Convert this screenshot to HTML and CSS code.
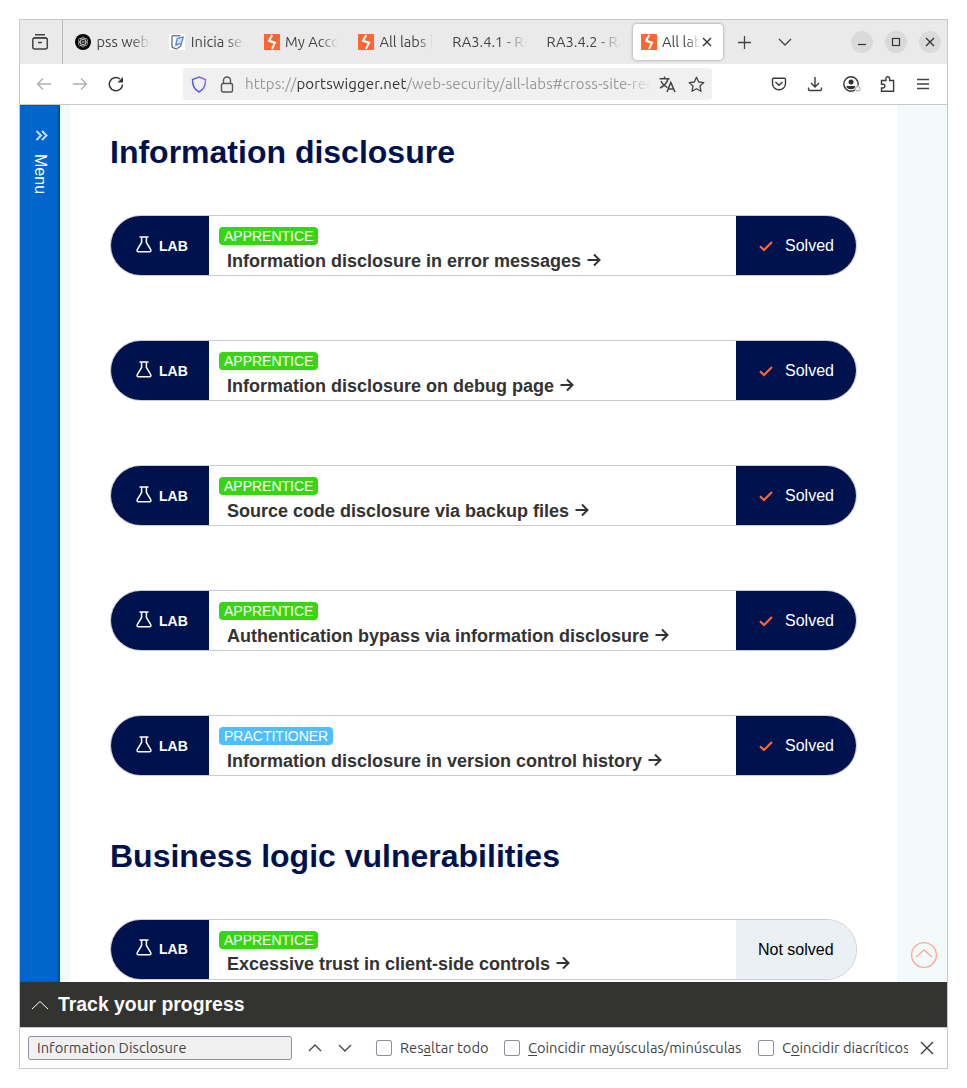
FILE: index.html
```html
<!DOCTYPE html>
<html lang="es">
<head>
<meta charset="utf-8">
<title>All labs</title>
<link rel="stylesheet" href="styles.css">
</head>
<body>
<svg class="defs" width="0" height="0">
  <symbol id="burp" viewBox="0 0 16 16"><rect width="16" height="16" fill="#ff6633"/><path d="M8.200 1 5 6.800 11 8.700 7.900 15" fill="none" stroke="#fff" stroke-width="2"/></symbol>
  <symbol id="flask" viewBox="0 0 16 17"><path d="M3.500 1h9M5.600 1.200v5.300L1.300 13.600c-.6 1.200 0 2.100 1.100 2.100h11.200c1.100 0 1.700-.9 1.100-2.100L10.400 6.500V1.200" fill="none" stroke="#fff" stroke-width="1.500"/></symbol>
  <symbol id="check" viewBox="0 0 14 12"><path d="M1 6.200 5 10 13 2" fill="none" stroke="#ff6633" stroke-width="2.200"/></symbol>
  <symbol id="arrow" viewBox="0 0 14 14"><path d="M.5 7h11.500M7 1.500 12.500 7 7 12.500" fill="none" stroke="#333332" stroke-width="2"/></symbol>
  <symbol id="chev" viewBox="0 0 14 8"><path d="M1 1l6 6 6-6" fill="none" stroke="currentColor" stroke-width="1.300"/></symbol>
</svg>
<div class="window">
  <header class="tabbar">
    <div class="recent"><svg width="18" height="18" viewBox="0 0 18 18" fill="none" stroke="#444" stroke-width="1.500"><path d="M4 1.800h10M2.500 4.800h13"/><rect x="1.800" y="5" width="14.500" height="11" rx="2"/><path d="M7 9.500h4"/></svg></div>
    <div class="tabs">
      <div class="tab"><svg width="16" height="16" viewBox="0 0 16 16"><circle cx="8" cy="8" r="8" fill="#000"/><g fill="none" stroke="#ddd" stroke-width=".7"><ellipse cx="8" cy="8" rx="2.500" ry="5"/><ellipse cx="8" cy="8" rx="2.500" ry="5" transform="rotate(60 8 8)"/><ellipse cx="8" cy="8" rx="2.500" ry="5" transform="rotate(120 8 8)"/><circle cx="8" cy="8" r="1"/></g></svg><span class="label">pss web</span></div>
      <div class="tab"><svg width="16" height="16" viewBox="0 0 16 16"><rect width="16" height="16" fill="#fff"/><path d="M12 9.500V12L7.500 15 3 13.300V1.800h8.500" fill="#fff" stroke="#3c435c" stroke-width="1"/><path d="M8.200 4.300 14.300 3 12.300 9.500 6.800 10.700z" fill="#d6e5ff" stroke="#4c7df0" stroke-width="1.200"/><path d="M6.800 10.700 4.500 13l4.500-1.200" fill="#9dbcff"/></svg><span class="label n2">Inicia se</span></div>
      <div class="tab"><svg width="16" height="16"><use href="#burp"/></svg><span class="label n3">My Acco</span></div>
      <div class="tab sep"><svg width="16" height="16"><use href="#burp"/></svg><span class="label n4">All labs</span></div>
      <div class="tab"><span class="label wide">RA3.4.1 - RA</span></div>
      <div class="tab"><span class="label wide">RA3.4.2 - RA</span></div>
    </div>
    <div class="tab-active"><svg width="16" height="16"><use href="#burp"/></svg><span class="label short">All labs</span><svg width="10" height="10" viewBox="0 0 10 10"><path d="M1 1l8 8M9 1l-8 8" stroke="#333" stroke-width="1.400"/></svg></div>
    <svg class="plus" width="13" height="13" viewBox="0 0 13 13"><path d="M6.500 0v13M0 6.500h13" stroke="#444" stroke-width="1.300"/></svg>
    <svg class="list" width="14" height="8"><use href="#chev"/></svg>
    <div class="controls">
      <span><svg width="22" height="22"><path d="M7 13.500h8" stroke="#333" stroke-width="1.200"/></svg></span>
      <span><svg width="22" height="22"><rect x="7.500" y="7.500" width="7" height="7" fill="none" stroke="#333" stroke-width="1.200"/></svg></span>
      <span><svg width="22" height="22"><path d="M7 7l8 8M15 7l-8 8" stroke="#333" stroke-width="1.300"/></svg></span>
    </div>
  </header>
  <nav class="navbar">
    <div class="history">
      <svg width="16" height="16" viewBox="0 0 16 16" fill="none" stroke="#b0b0b0" stroke-width="1.400"><path d="M15 8H1.500M7 2.500 1.500 8 7 13.500"/></svg>
      <svg width="16" height="16" viewBox="0 0 16 16" fill="none" stroke="#b0b0b0" stroke-width="1.400"><path d="M1 8h13.500M9 2.500 14.500 8 9 13.500"/></svg>
      <svg width="16" height="16" viewBox="0 0 16 16" fill="none" stroke="#333" stroke-width="1.500"><path d="M14.500 8.500A6.600 6.600 0 1 1 12 3"/><path d="M15 1v5.500H9.500z" fill="#333" stroke="none"/></svg>
    </div>
    <div class="urlbar">
      <svg width="16" height="17" viewBox="0 0 16 17"><defs><linearGradient id="sh" x1="0" y1="1" x2="1" y2="0"><stop offset="0" stop-color="#2b50d8"/><stop offset="1" stop-color="#9b6bff"/></linearGradient></defs><path d="M8 1 14.500 3.500C14.700 9 13 13.500 8 16 3 13.500 1.300 9 1.500 3.500z" fill="none" stroke="url(#sh)" stroke-width="1.400"/></svg>
      <svg class="lock" width="14" height="17" viewBox="0 0 14 17" fill="none" stroke="#555" stroke-width="1.400"><rect x="1.500" y="7.500" width="11" height="8.500" rx="1.500"/><path d="M3.500 7V4.500a3.500 3.500 0 0 1 7 0V7"/></svg>
      <span class="url">https://<b>portswigger.net</b>/web-security/all-labs#cross-site-req</span>
      <svg width="17" height="17" viewBox="0 0 17 17" fill="none" stroke="#444" stroke-width="1.500"><path d="M.5 2.700h10M5.500.5v2M2 5c2 4 4 5.500 6.500 6.500M9 3C8 7 5 10 1 12"/><path d="M8 16l3.800-9.500L16 16M9.500 13h5"/></svg>
      <svg class="star" width="17" height="17" viewBox="0 0 17 17"><path d="M8.500 1.200 10.700 6l5.100.6-3.800 3.500 1 5.200-4.500-2.600L4 15.300l1-5.200L1.200 6.600 6.300 6z" fill="none" stroke="#444" stroke-width="1.300" stroke-linejoin="round"/></svg>
    </div>
    <div class="tools">
      <svg width="16" height="16" viewBox="0 0 16 16" fill="none" stroke="#3b3b3b" stroke-width="1.400"><path d="M2.500 2.200h11a1 1 0 0 1 1 1v4.300a6.500 6.300 0 0 1-13 0V3.200a1 1 0 0 1 1-1zM4.500 6 8 9.300 11.500 6"/></svg>
      <svg width="16" height="16" viewBox="0 0 16 16" fill="none" stroke="#3b3b3b" stroke-width="1.400"><path d="M8 1v10M4 7l4 4 4-4M1.500 11.500V13a1.500 1.500 0 0 0 1.500 1.500h10a1.500 1.500 0 0 0 1.500-1.500v-1.500"/></svg>
      <svg width="18" height="16" viewBox="0 0 18 16"><circle cx="8" cy="8" r="7.200" fill="none" stroke="#333" stroke-width="1.400"/><circle cx="8" cy="6" r="2.500" fill="#333"/><path d="M3.500 10h9v1c-1 3-8 3-9 0z" fill="#333"/><circle cx="14.800" cy="12.800" r="3.200" fill="#fff"/><circle cx="14.800" cy="12.800" r="2.300" fill="none" stroke="#999"/></svg>
      <svg width="16" height="16" viewBox="0 0 16 16" fill="none" stroke="#3b3b3b" stroke-width="1.400"><path d="M1.500 7V4.500H6V2.500a1.800 1.800 0 0 1 3.600 0v2h4v10.800H1.500V12H3a1.900 1.900 0 0 0 0-3.800H1.500z"/></svg>
      <svg width="14" height="12" viewBox="0 0 14 12"><path d="M1 1.500h12M1 6h12M1 10.500h12" stroke="#444" stroke-width="1.300"/></svg>
    </div>
  </nav>
  <div class="viewport">
    <aside class="menu"><svg width="13" height="11" viewBox="0 0 13 11"><path d="M1.500 1 6 5.500 1.500 10M7 1l4.500 4.500L7 10" fill="none" stroke="#c9dcf2" stroke-width="2"/></svg><span>Menu</span></aside>
    <main class="page">
      <h2>Information disclosure</h2>
      <article class="lab"><div class="kind"><svg width="16" height="17"><use href="#flask"/></svg>LAB</div><div class="info"><span class="level">APPRENTICE</span><a>Information disclosure in error messages<svg width="14" height="14"><use href="#arrow"/></svg></a></div><div class="status"><svg width="14" height="12"><use href="#check"/></svg>Solved</div></article>
      <article class="lab"><div class="kind"><svg width="16" height="17"><use href="#flask"/></svg>LAB</div><div class="info"><span class="level">APPRENTICE</span><a>Information disclosure on debug page<svg width="14" height="14"><use href="#arrow"/></svg></a></div><div class="status"><svg width="14" height="12"><use href="#check"/></svg>Solved</div></article>
      <article class="lab"><div class="kind"><svg width="16" height="17"><use href="#flask"/></svg>LAB</div><div class="info"><span class="level">APPRENTICE</span><a>Source code disclosure via backup files<svg width="14" height="14"><use href="#arrow"/></svg></a></div><div class="status"><svg width="14" height="12"><use href="#check"/></svg>Solved</div></article>
      <article class="lab"><div class="kind"><svg width="16" height="17"><use href="#flask"/></svg>LAB</div><div class="info"><span class="level">APPRENTICE</span><a>Authentication bypass via information disclosure<svg width="14" height="14"><use href="#arrow"/></svg></a></div><div class="status"><svg width="14" height="12"><use href="#check"/></svg>Solved</div></article>
      <article class="lab"><div class="kind"><svg width="16" height="17"><use href="#flask"/></svg>LAB</div><div class="info"><span class="level practitioner">PRACTITIONER</span><a>Information disclosure in version control history<svg width="14" height="14"><use href="#arrow"/></svg></a></div><div class="status"><svg width="14" height="12"><use href="#check"/></svg>Solved</div></article>
      <h2>Business logic vulnerabilities</h2>
      <article class="lab last"><div class="kind"><svg width="16" height="17"><use href="#flask"/></svg>LAB</div><div class="info"><span class="level">APPRENTICE</span><a>Excessive trust in client-side controls<svg width="14" height="14"><use href="#arrow"/></svg></a></div><div class="status open">Not solved</div></article>
    </main>
    <div class="gutter"><svg width="28" height="28" viewBox="0 0 28 28" fill="none" stroke="#ffab91" stroke-width="1.400"><circle cx="14" cy="14" r="12.400"/><path d="M6 16l8-7 8 7"/></svg></div>
  </div>
  <div class="progress"><svg width="18" height="10" viewBox="0 0 18 10"><path d="M1 9l8-7.500L17 9" fill="none" stroke="#fff" stroke-width="1"/></svg>Track your progress</div>
  <footer class="find">
    <div class="field">Information Disclosure</div>
    <svg class="prev" width="14" height="8"><use href="#chev"/></svg>
    <svg class="next" width="14" height="8"><use href="#chev"/></svg>
    <label class="opt o1"><i></i><span>Res<u>a</u>ltar todo</span></label>
    <label class="opt o2"><i></i><span><u>C</u>oincidir mayúsculas/minúsculas</span></label>
    <label class="opt o3"><i></i><span>C<u>o</u>incidir diacríticos</span></label>
    <svg class="close" width="14" height="14" viewBox="0 0 14 14"><path d="M1 1l12 12M13 1 1 13" stroke="#333" stroke-width="1.300"/></svg>
  </footer>
</div>
</body>
</html>
```

FILE: styles.css
```css
* { box-sizing: border-box; }
body { margin: 0; padding: 19px; background: #fff; font-family: Ubuntu, "Noto Sans", sans-serif; color: #444; }
svg { display: block; flex: none; }
.defs { position: absolute; }
.window { width: 929px; height: 1050px; border: 1px solid #c8c8c8; display: flex; flex-direction: column; overflow: hidden; }

.tabbar { height: 44px; flex: none; background: #eaeaea; display: flex; align-items: center; font-size: 14.67px; }
.recent { width: 43px; height: 44px; border-right: 1px solid #bcbcbc; display: flex; align-items: center; padding-left: 11px; }
.tabs { display: grid; grid-template-columns: repeat(6, 94.3px); width: 570px; padding-left: 12px; }
.tab { display: flex; align-items: center; gap: 5.5px; position: relative; }
.sep::after { content: ""; position: absolute; left: 73px; top: 2px; width: 1px; height: 15px; background: #dcdcdc; }
.label { width: 53px; overflow: hidden; white-space: nowrap; line-height: 20px; -webkit-mask-image: linear-gradient(90deg, #000 65%, transparent); mask-image: linear-gradient(90deg, #000 65%, transparent); }
.label.n4 { width: 50px; -webkit-mask-image: linear-gradient(90deg, #000 75%, rgba(0,0,0,.35)); mask-image: linear-gradient(90deg, #000 75%, rgba(0,0,0,.35)); }
.label.wide { width: 75px; }
.label.short { width: 38px; }
.tab-active { width: 90px; height: 36px; border-radius: 4px; background: #fff; box-shadow: 0 0 3px rgba(0,0,0,.4); display: flex; align-items: center; padding-left: 8px; gap: 5px; }
.tab-active .short { margin-right: -3px; }
.plus { margin-left: 15px; }
.list { margin-left: 27px; }
.controls { display: flex; gap: 12px; margin-left: 59px; }
.controls span { width: 22px; height: 22px; border-radius: 50%; background: #dadada; }

.navbar { height: 41px; flex: none; border-bottom: 1px solid #c8c8c8; display: flex; align-items: center; }
.history { display: flex; gap: 20px; padding-left: 16px; width: 163px; }
.urlbar { width: 529px; height: 32px; border-radius: 4px; background: #f0f0f0; display: flex; align-items: center; padding-left: 8px; }
.lock { margin-left: 13px; }
.url { width: 407px; margin: 0 7px 0 11px; font-size: 15px; line-height: 22px; letter-spacing: .14px; white-space: nowrap; overflow: hidden; color: #999; -webkit-mask-image: linear-gradient(90deg, #000 93%, transparent); mask-image: linear-gradient(90deg, #000 93%, transparent); }
.url b { font-weight: 400; color: #333; }
.star { margin-left: 12px; }
.tools { display: flex; align-items: center; gap: 20px; margin-left: 59px; }
.tools svg:nth-child(4) { margin-left: -1px; }

.viewport { height: 877px; flex: none; display: flex; background: #f2fafc; overflow: hidden; font-family: "Liberation Sans", Arial, sans-serif; }
.menu { width: 40px; background: #0066cc; box-shadow: inset -2px 0 2px rgba(0,30,90,.35); padding: 25px 0 0 15px; color: #fff; font-size: 16px; }
.menu span { display: block; writing-mode: vertical-rl; line-height: 18px; margin: 13px 0 0 -4px; }
.page { width: 827px; margin-left: 10px; padding: 29px 40px 0; background: #fff; }
h2 { margin: 0 0 45px; height: 36px; font-size: 32px; line-height: 36px; color: #00124e; }
.lab { display: flex; width: 747px; height: 61px; margin-bottom: 64px; border: 1px solid #c8ced0; border-radius: 31px; overflow: hidden; }
.kind { width: 98px; background: #00124e; color: #fff; font-size: 14px; font-weight: 700; display: flex; align-items: center; gap: 7px; padding-left: 25px; }
.kind svg { margin-top: -3px; }
.info { width: 527px; padding: 11px 0 0 10px; }
.level { display: block; width: max-content; height: 18px; padding: 0 5px; line-height: 18px; font-size: 14px; border-radius: 4px; background: #38d612; color: #fff; }
.practitioner { background: #4ebeff; }
.info a { display: flex; align-items: center; gap: 6px; margin: 5px 0 0 8px; font-size: 18px; line-height: 22px; font-weight: 700; color: #333332; white-space: nowrap; }
.info a svg { margin-top: -2px; }
.status { width: 120px; background: #00124e; color: #fff; font-size: 16px; display: flex; align-items: center; padding-left: 23px; gap: 12px; }
.status.open { background: #eaf0f3; color: #000; padding-left: 22px; }
h2:nth-of-type(2) { margin-top: -2px; }
.last .kind { padding-bottom: 2px; }
.last .info a { margin-top: 4px; }
.gutter { width: 50px; display: flex; align-items: flex-end; padding: 0 0 13px 13px; }

.progress { height: 45px; flex: none; background: #333332; color: #fff; font: 700 19.4px "Liberation Sans", Arial, sans-serif; display: flex; align-items: center; gap: 9px; padding-left: 11px; }
.find { height: 41px; flex: none; border-top: 1px solid #c8c8c8; display: flex; align-items: center; font-size: 14.67px; white-space: nowrap; }
.field { width: 264px; height: 24px; margin-left: 8px; border: 1px solid #8f8f9d; border-radius: 3px; background: #f0f0f0; padding-left: 8px; line-height: 22px; }
.prev { margin-left: 16px; transform: rotate(180deg); }
.next { margin-left: 16px; }
.opt { display: flex; align-items: center; gap: 8px; }
.opt i { width: 16px; height: 16px; flex: none; border: 1px solid #8f8f9d; border-radius: 2px; }
.opt span { overflow: hidden; line-height: 20px; padding-bottom: 1px; }
.opt u { text-underline-offset: 2px; }
.o1 { width: 112px; margin-left: 24px; }
.o2 { width: 238px; margin-left: 16px; }
.o3 { width: 150px; margin-left: 16px; }
.o3 span { width: 126px; }
.close { margin-left: 12px; }
```
